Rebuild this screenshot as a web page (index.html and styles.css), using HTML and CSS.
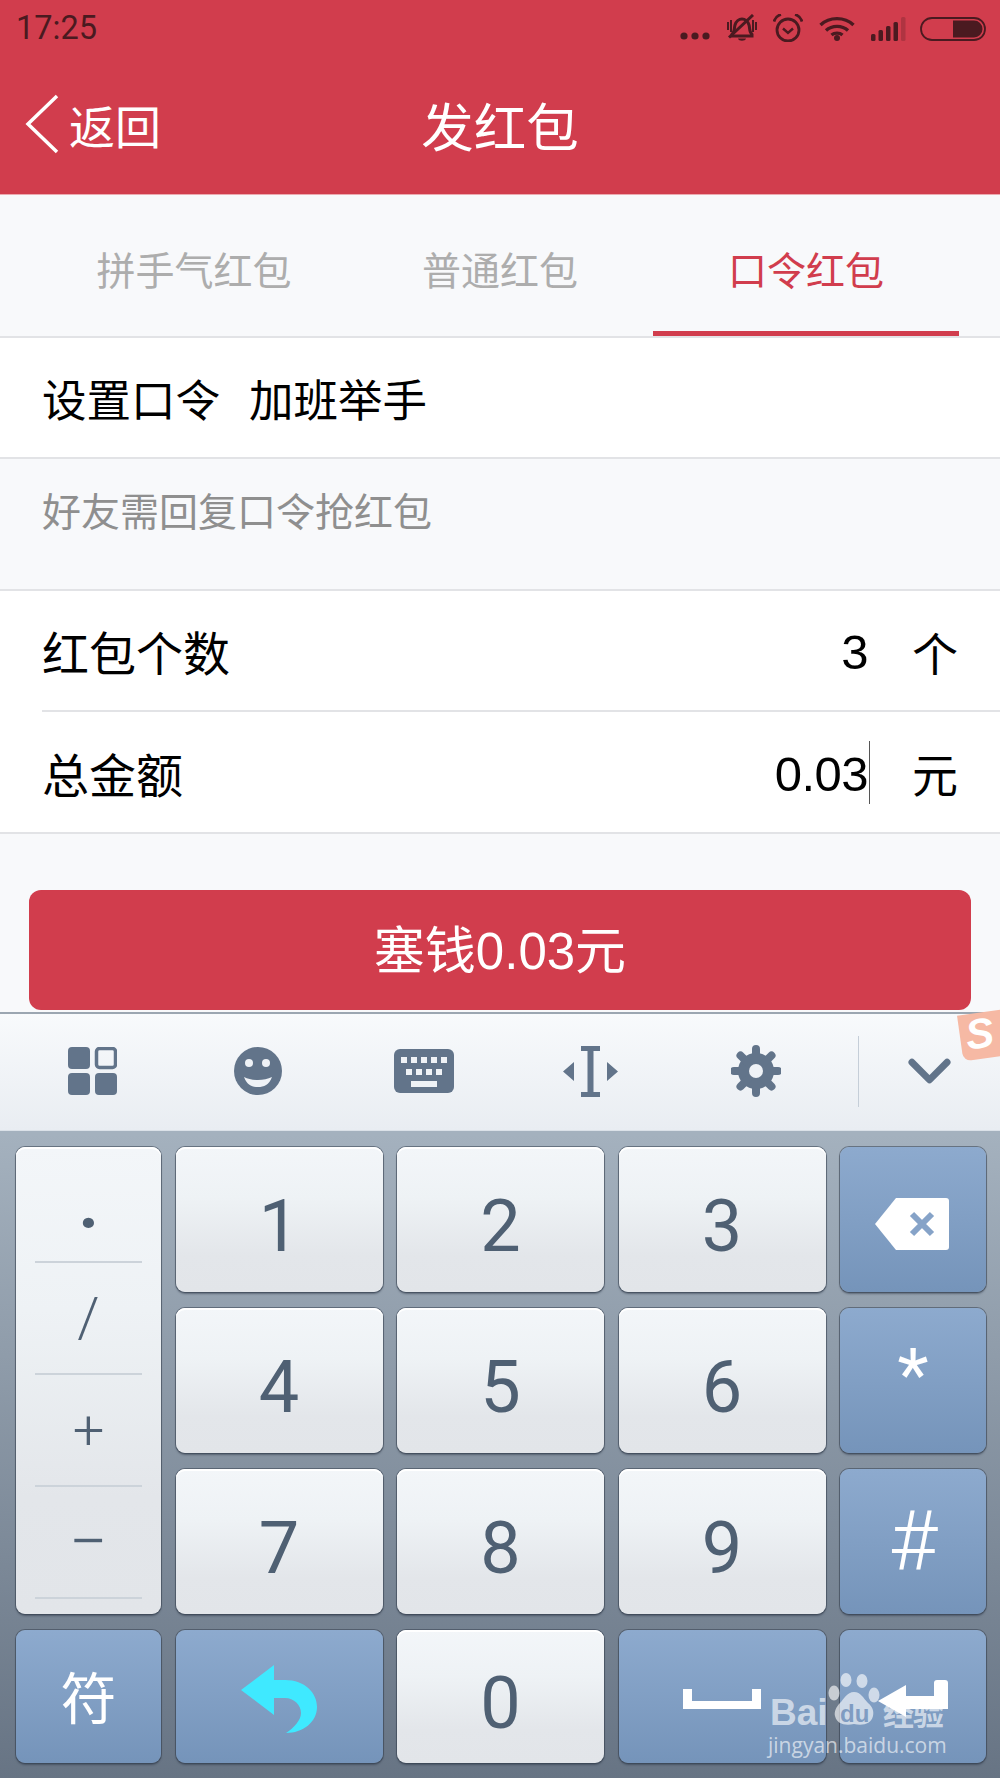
FILE: index.html

```html
<!DOCTYPE html>
<html lang="zh-CN">
<head>
  <meta charset="UTF-8" />
  <meta name="viewport" content="width=device-width, initial-scale=1.0">
  <title>发红包</title>
  <link rel="stylesheet" href="styles.css">
</head>
<body>
  <header class="header">
    <div class="status">
      <span class="time">17:25</span>
      <div class="status-icons">
        <svg class="ic-dots" viewBox="0 0 30 8"><circle cx="4" cy="4" r="3.6"/><circle cx="15" cy="4" r="3.6"/><circle cx="26" cy="4" r="3.6"/></svg>
        <svg class="ic-bell" viewBox="0 0 32 28">
          <path d="M6 20.500c3-2.500 2-6 3-9.500 1-3.500 4-6 7-6s6 2.500 7 6c1 3.500 0 7 3 9.500v1.500H6z" fill="none" stroke="#4a1a20" stroke-width="3"/>
          <path d="M12 24.500h8c-.5 3-7.500 3-8 0zM1 8h2v8H1zM4 6h2v12H4zM26 6h2v12h-2zM29 8h2v8h-2z"/>
          <path d="M3 23.500L27 1" stroke="#4a1a20" stroke-width="3"/>
        </svg>
        <svg class="ic-alarm" viewBox="0 0 30 28">
          <circle cx="15" cy="16" r="11" fill="none" stroke="#4a1a20" stroke-width="2.800"/>
          <path d="M10 14.500l5 4.500 5-4.500" fill="none" stroke="#4a1a20" stroke-width="2.400"/>
          <path d="M1 7.500C2 4 4.500 1.500 8 .5M29 7.500C28 4 25.500 1.500 22 .5" fill="none" stroke="#4a1a20" stroke-width="2.800"/>
        </svg>
        <svg class="ic-wifi" viewBox="0 0 36 25">
          <path d="M1.500 9C10.500 .5 25.500 .5 34.500 9M7 14.500c6-5.500 16-5.500 22 0M12.500 19c3-2.500 8-2.500 11 0" fill="none" stroke="#4a1a20" stroke-width="3.400"/>
          <circle cx="18" cy="22" r="3"/>
        </svg>
        <svg class="ic-signal" viewBox="0 0 35 24">
          <rect x="0" y="17" width="4.500" height="7" rx="1.500"/>
          <rect x="7.500" y="13" width="4.500" height="11" rx="1.500"/>
          <rect x="15" y="9" width="4.500" height="15" rx="1.500"/>
          <rect x="22.500" y="5" width="4.500" height="19" rx="1.500"/>
          <rect x="30" y="0" width="4.500" height="24" rx="1.500" opacity=".25"/>
        </svg>
        <svg class="ic-battery" viewBox="0 0 66 24">
          <rect x="1" y="1" width="64" height="22" rx="11" fill="none" stroke="#4a1a20" stroke-width="1.800"/>
          <path d="M33 3.500h21a8.500 8.500 0 0 1 0 17H33z"/>
        </svg>
      </div>
    </div>
    <nav class="nav">
      <div class="back">
        <svg class="ic-back" viewBox="0 0 34 60"><path d="M32 2L3 30l29 28" fill="none" stroke="#fff" stroke-width="3.500"/></svg>
        <span>返回</span>
      </div>
      <div class="title">发红包</div>
      <div></div>
    </nav>
  </header>

  <div class="tabs">
    <div class="tab">拼手气红包</div>
    <div class="tab">普通红包</div>
    <div class="tab active">口令红包</div>
  </div>

  <div class="row row-pass">
    <span>设置口令</span>
    <span>加班举手</span>
  </div>
  <div class="hint">好友需回复口令抢红包</div>

  <div class="group">
    <div class="row row-field">
      <span class="label">红包个数</span>
      <span class="value">3</span>
      <span class="unit">个</span>
    </div>
    <div class="row row-field">
      <span class="label">总金额</span>
      <span class="value caret">0.03</span>
      <span class="unit">元</span>
    </div>
  </div>

  <div class="submit-wrap">
    <button class="submit">塞钱0.03元</button>
  </div>

  <section class="keyboard">
    <div class="toolbar">
      <div class="tool">
        <svg class="tool-grid" viewBox="0 0 49 48">
          <rect x="0" y="0" width="22" height="22" rx="4"/>
          <rect x="28.500" y="1.500" width="19" height="19" rx="3" fill="none" stroke="#62748a" stroke-width="3.500"/>
          <rect x="0" y="26" width="22" height="22" rx="4"/>
          <rect x="27" y="26" width="22" height="22" rx="4"/>
        </svg>
      </div>
      <div class="tool">
        <svg class="tool-smile" viewBox="0 0 48 48">
          <circle cx="24" cy="24" r="24"/>
          <circle cx="15" cy="16" r="4" fill="#eff2f6"/>
          <circle cx="32" cy="16" r="4" fill="#eff2f6"/>
          <path d="M10 30c8 4 20 4 28 0-3 8-8 10-14 10s-11-2-14-10z" fill="#eff2f6"/>
        </svg>
      </div>
      <div class="tool">
        <svg class="tool-keys" viewBox="0 0 60 44">
          <rect width="60" height="44" rx="6"/>
          <g fill="#eff2f6">
            <rect x="7" y="8" width="6" height="6"/><rect x="17" y="8" width="6" height="6"/><rect x="27" y="8" width="6" height="6"/><rect x="37" y="8" width="6" height="6"/><rect x="47" y="8" width="6" height="6"/>
            <rect x="12" y="20" width="6" height="6"/><rect x="22" y="20" width="6" height="6"/><rect x="32" y="20" width="6" height="6"/><rect x="42" y="20" width="6" height="6"/>
            <rect x="17" y="32" width="26" height="6"/>
          </g>
        </svg>
      </div>
      <div class="tool">
        <svg class="tool-cursor" viewBox="0 0 55 51">
          <path d="M18 0h19v5h-6.500v41H37v5H18v-5h6.500V5H18z"/>
          <path d="M11 16v19L0 25.500zM44 16v19l11-9.500z"/>
        </svg>
      </div>
      <div class="tool">
        <svg class="tool-gear" viewBox="0 0 50 52">
          <circle cx="25" cy="26" r="18"/>
          <path d="M25 4v44M3 26h44M9.500 10.500l31 31M40.500 10.500l-31 31" stroke="#62748a" stroke-width="8" stroke-linecap="round"/>
          <circle cx="25" cy="26" r="7" fill="#eff2f6"/>
        </svg>
      </div>
      <div class="tool-sep"></div>
      <div class="tool-down">
        <svg class="tool-chevron" viewBox="0 0 44 27"><path d="M4 4l18 18L40 4" fill="none" stroke="#62748a" stroke-width="7" stroke-linecap="round" stroke-linejoin="round"/></svg>
      </div>
      <div class="sogou"><span>S</span></div>
    </div>

    <div class="keys">
      <div class="key side">
        <div class="side-cell first">·</div>
        <div class="side-cell">/</div>
        <div class="side-cell">+</div>
        <div class="side-cell minus">−</div>
        <div class="side-cell last"></div>
      </div>
      <div class="key num">1</div>
      <div class="key num">2</div>
      <div class="key num">3</div>
      <div class="key fn">
        <svg class="ic-del" viewBox="0 0 74 52">
          <path d="M21 0h50a3 3 0 0 1 3 3v46a3 3 0 0 1-3 3H21L0 26z" fill="#fff"/>
          <path d="M37 16l20 20M57 16L37 36" stroke="#86a3c8" stroke-width="6"/>
        </svg>
      </div>
      <div class="key num">4</div>
      <div class="key num">5</div>
      <div class="key num">6</div>
      <div class="key fn star">*</div>
      <div class="key num">7</div>
      <div class="key num">8</div>
      <div class="key num">9</div>
      <div class="key fn hash">#</div>
      <div class="key fn sym">符</div>
      <div class="key fn">
        <svg class="ic-undo" viewBox="0 0 76 68">
          <path d="M0 25L33 0v15h11c20 0 32 13 32 27 0 15-14 26-31 26 8-5 15-13 15-20 0-8-7-15-16-15H33v17z" fill="#3fe9ff"/>
        </svg>
      </div>
      <div class="key num">0</div>
      <div class="key fn">
        <svg class="ic-space" viewBox="0 0 78 20"><path d="M0 0h9v12h60V0h9v20H0z" fill="#fff"/></svg>
      </div>
      <div class="key fn">
        <svg class="ic-enter" viewBox="0 0 70 42">
          <path d="M0 21L28 5v11h28V3a3 3 0 0 1 3-3h8a3 3 0 0 1 3 3v26H28v8z" fill="#fff"/>
        </svg>
      </div>
    </div>
  </section>

  <div class="watermark">
    <svg class="paw" viewBox="0 0 52 54">
      <ellipse cx="18" cy="7" rx="5.500" ry="7"/>
      <ellipse cx="34" cy="8" rx="5.500" ry="7"/>
      <ellipse cx="6" cy="20" rx="5.500" ry="7.500"/>
      <ellipse cx="46" cy="22" rx="5.500" ry="7.500"/>
      <path d="M26 19c7 0 9 6 14 11 5 4 6 9 5 13-2 8-10 10-19 8-9 2-17 0-19-8-1-4 1-9 5-13 4-4 7-11 14-11z"/>
    </svg>
    <div class="wm-line">
      <span class="wm-bai">Bai</span><span class="wm-du">du</span><span class="wm-jy">经验</span>
    </div>
    <div class="wm-url">jingyan.baidu.com</div>
  </div>
</body>
</html>
```

FILE: styles.css

```css
* {
  box-sizing: border-box;
}
html, body {
  margin: 0;
  padding: 0;
}
body {
  position: relative;
  width: 1000px;
  height: 1778px;
  overflow: hidden;
  background-color: #f8f9fb;
  font-family: "Noto Sans CJK SC", "Liberation Sans", sans-serif;
  color: #000;
}
svg {
  display: block;
}

/* header */
.header {
  height: 195px;
  background-color: #d13d4d;
  border-bottom: 1px solid #ecaab0;
  color: #fff;
}
.status {
  height: 54px;
  display: flex;
  justify-content: space-between;
  align-items: center;
  padding: 3px 14px 0 16px;
}
.time {
  font-family: Roboto, sans-serif;
  font-size: 32.500px;
  color: #4a1a20;
  line-height: 1;
}
.status-icons {
  display: flex;
  align-items: flex-start;
  fill: #4a1a20;
  height: 30px;
}
.ic-dots { width: 30px; height: 8px; margin-top: 18px; }
.ic-bell { width: 32px; height: 28px; margin-left: 16px; }
.ic-alarm { width: 30px; height: 28px; margin-left: 15px; }
.ic-wifi { width: 36px; height: 25px; margin-left: 16px; margin-top: 2px; }
.ic-signal { width: 35px; height: 24px; margin-left: 16px; margin-top: 3px; }
.ic-battery { width: 66px; height: 24px; margin-left: 14px; margin-top: 3px; }

.nav {
  height: 140px;
  display: grid;
  grid-template-columns: 1fr auto 1fr;
  align-items: center;
}
.back {
  display: flex;
  align-items: center;
  padding-left: 25px;
  font-size: 46px;
  line-height: 1;
}
.ic-back { width: 34px; height: 60px; margin-right: 10px; }
.title {
  font-size: 52.500px;
  line-height: 1;
}

/* tabs */
.tabs {
  display: flex;
  height: 143px;
  padding: 0 41px;
  border-bottom: 2px solid #e2e3e6;
}
.tab {
  flex: 1;
  display: flex;
  align-items: center;
  justify-content: center;
  padding-top: 10px;
  font-size: 39px;
  line-height: 1;
  color: #adadad;
  border-bottom: 5px solid transparent;
}
.tab.active {
  color: #d13d4d;
  border-bottom-color: #d13d4d;
}

/* form */
.row {
  display: flex;
  align-items: center;
  background-color: #fff;
}
.row-pass {
  height: 121px;
  padding: 0 0 0 42px;
  gap: 29px;
  font-size: 44.500px;
  border-bottom: 2px solid #e2e3e6;
}
.hint {
  height: 132px;
  padding: 23px 0 0 42px;
  font-size: 39px;
  line-height: 54px;
  color: #8f8f8f;
  border-bottom: 2px solid #e2e3e6;
}
.group {
  background-color: #fff;
  padding-left: 42px;
  border-bottom: 2px solid #e2e3e6;
}
.row-field {
  height: 120px;
  padding: 0 42px 0 0;
  font-size: 47px;
}
.row-field:first-child {
  border-bottom: 2px solid #e2e3e6;
  height: 121px;
}
.label {
  flex: 1;
}
.value {
  position: relative;
  font-family: "Liberation Sans", sans-serif;
  font-size: 49px;
  letter-spacing: -.5px;
  line-height: 1;
  margin-top: 4px;
}
.caret::after {
  content: "";
  position: absolute;
  right: -2px;
  top: -9px;
  width: 1px;
  height: 63px;
  background-color: #555;
}
.unit {
  margin-left: 44px;
  font-size: 46px;
}

.submit-wrap {
  padding: 56px 29px 0;
}
.submit {
  display: block;
  width: 100%;
  height: 120px;
  padding: 3px 0 0;
  border: none;
  border-radius: 12px;
  background-color: #d13d4d;
  color: #fff;
  font-family: "Liberation Sans", "Noto Sans CJK SC", sans-serif;
  font-size: 51px;
  line-height: 1;
}

/* keyboard */
.keyboard {
  position: absolute;
  left: 0;
  top: 1012px;
  width: 1000px;
  height: 766px;
  border-top: 2px solid #9ba6b1;
  background: linear-gradient(#a4b1be 120px, #677484);
}
.toolbar {
  position: relative;
  display: flex;
  align-items: center;
  height: 117px;
  padding: 0 0 2px 9px;
  background: linear-gradient(#f8fafc, #e9edf2);
  border-bottom: 1px solid #dbe1e8;
  fill: #62748a;
}
.tool {
  width: 166px;
  display: flex;
  justify-content: center;
}
.tool-grid { width: 49px; height: 48px; }
.tool-smile { width: 48px; height: 48px; }
.tool-keys { width: 60px; height: 44px; }
.tool-cursor { width: 55px; height: 51px; }
.tool-gear { width: 50px; height: 52px; }
.tool-sep {
  width: 1px;
  height: 71px;
  margin-left: 19px;
  background-color: #c5ced8;
}
.tool-down {
  margin-left: 49px;
}
.tool-chevron { width: 43px; height: 27px; }
.sogou {
  position: absolute;
  left: 960px;
  top: -2px;
  width: 52px;
  height: 46px;
  background-color: #f6b9a4;
  border-radius: 0 0 0 8px;
  transform: rotate(-8deg);
}
.sogou span {
  display: block;
  padding-left: 6px;
  font-family: "Liberation Sans", sans-serif;
  font-weight: bold;
  font-style: italic;
  font-size: 42px;
  line-height: 42px;
  color: #fff;
}

.keys {
  display: grid;
  grid-template-columns: 145px 207px 207px 207px 146px;
  grid-template-rows: 145px 145px 145px 133px;
  column-gap: 14.500px;
  row-gap: 16px;
  padding: 16px 0 0 16px;
}
.key {
  display: flex;
  align-items: center;
  justify-content: center;
  border-radius: 9px;
  box-shadow: 0 0 0 1px rgba(55, 65, 80, .55), 0 2px 2px rgba(40, 50, 65, .5);
}
.num, .side {
  background: linear-gradient(#f3f6f9 0, #eef2f5 35%, #e3e6ea 75%, #e2e5e9);
  box-shadow: 0 0 0 1px rgba(55, 65, 80, .55), 0 2px 2px rgba(40, 50, 65, .5), inset 0 2px 0 #fff;
  font-family: Roboto, sans-serif;
  font-size: 72px;
  line-height: 1;
  color: #4f6073;
  padding-top: 14px;
}
.fn {
  background: linear-gradient(#8daace, #7594ba);
  color: #fff;
  font-family: Roboto, sans-serif;
}
.side {
  grid-row: 1 / 4;
  display: flex;
  flex-direction: column;
  align-items: stretch;
  justify-content: flex-start;
  padding: 0;
  font-size: 56px;
  font-weight: 300;
}
.side-cell {
  height: 112px;
  margin: 0 19px;
  display: flex;
  align-items: center;
  justify-content: center;
  border-bottom: 2px solid #ccd3da;
}
.side-cell.first {
  height: 116px;
  padding-top: 38px;
  font-size: 70px;
  font-weight: 700;
}
.side-cell.minus {
  font-size: 68px;
  font-weight: 300;
}
.side-cell.last {
  height: 15px;
  border-bottom: none;
}
.star {
  align-items: flex-start;
  padding-top: 32px;
  font-size: 72px;
  line-height: 1;
}
.hash {
  font-size: 84px;
  font-weight: 300;
  line-height: 1;
}
.sym {
  font-family: "Noto Sans CJK SC", sans-serif;
  font-size: 56px;
  line-height: 1;
  padding-bottom: 4px;
}
.ic-del { width: 74px; height: 52px; margin: 8px 3px 0 0; }
.ic-undo { width: 76px; height: 68px; margin-top: 4px; margin-right: 1px; }
.ic-space { width: 78px; height: 20px; margin-top: 4px; }
.ic-enter { width: 70px; height: 42px; margin-top: 9px; }

/* watermark */
.watermark {
  position: absolute;
  left: 768px;
  top: 1673px;
  width: 180px;
  height: 84px;
  color: rgba(255, 255, 255, .62);
  fill: rgba(255, 255, 255, .62);
}
.paw {
  position: absolute;
  left: 60px;
  top: 0;
  width: 52px;
  height: 54px;
}
.wm-line {
  position: absolute;
  left: 2px;
  top: 22px;
  white-space: nowrap;
  font-family: "Liberation Sans", sans-serif;
  font-weight: bold;
  font-size: 37px;
  line-height: 36px;
}
.wm-du {
  position: absolute;
  left: 70px;
  top: 6px;
  font-size: 24px;
  line-height: 26px;
  color: #7f9cc2;
}
.wm-jy {
  position: absolute;
  left: 113px;
  top: 0;
  font-family: "Noto Sans CJK SC", sans-serif;
  font-size: 31px;
  line-height: 34px;
  letter-spacing: -1px;
}
.wm-url {
  position: absolute;
  left: 0;
  top: 60px;
  font-family: "Open Sans", sans-serif;
  font-size: 21px;
  line-height: 24px;
  white-space: nowrap;
}
```
